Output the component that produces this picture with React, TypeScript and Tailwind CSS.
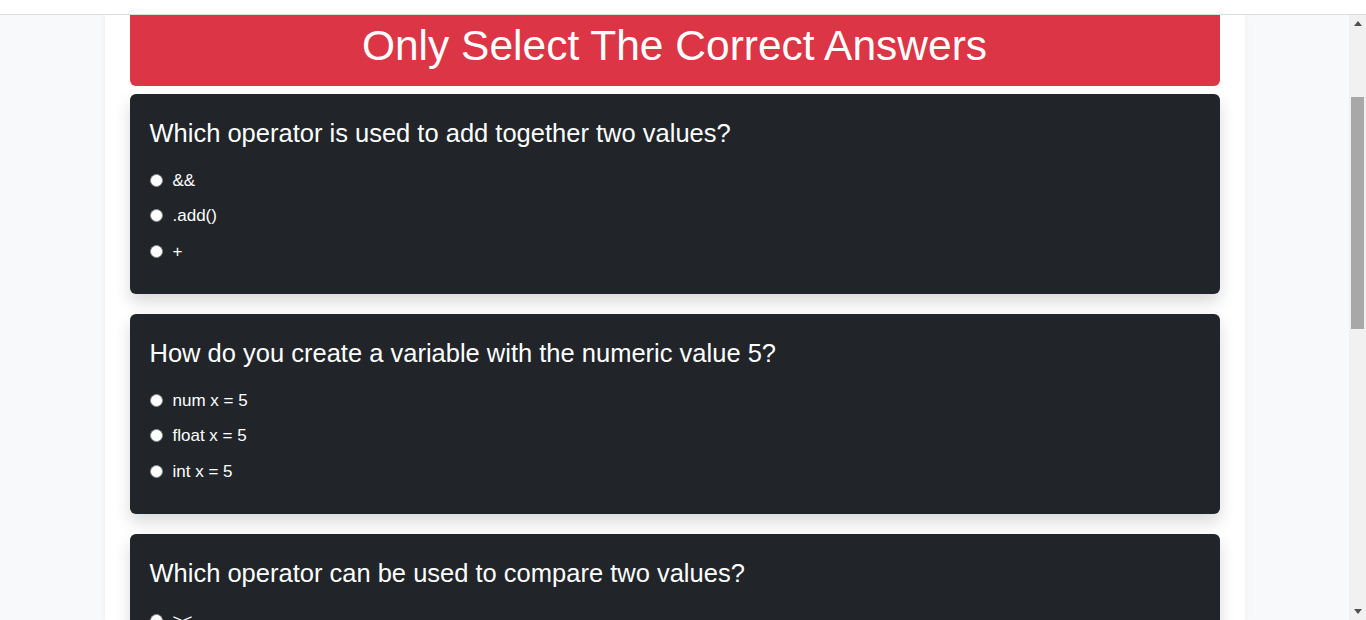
const questions = [
  {
    q: "Which operator is used to add together two values?",
    options: ["&&", ".add()", "+"],
  },
  {
    q: "How do you create a variable with the numeric value 5?",
    options: ["num x = 5", "float x = 5", "int x = 5"],
  },
  {
    q: "Which operator can be used to compare two values?",
    options: ["><", "<>", "==", "="],
  },
]

function QuestionCard({ index, q, options }: { index: number; q: string; options: string[] }) {
  return (
    <div className="h-[200px] shrink-0 overflow-hidden rounded-md bg-[#212529] px-5 pt-6 shadow-[0_0.5rem_1rem_rgba(0,0,0,0.15)]">
      <h3 className="text-[25.5px] leading-[30px] font-normal text-white">{q}</h3>
      <div className="mt-[19.5px] flex flex-col gap-[10px]">
        {options.map((opt) => (
          <label key={opt} className="flex items-center gap-[10px] text-[17px] leading-[25.5px] text-white">
            <input
              type="radio"
              name={`q${index}`}
              className="m-0 h-[13px] w-[13px] appearance-none rounded-full border border-[#8a8a8a] bg-white"
            />
            <span>{opt}</span>
          </label>
        ))}
      </div>
    </div>
  )
}

export default function App() {
  return (
    <div className="flex h-[620px] flex-col overflow-hidden bg-[#f8f9fa] font-['Liberation_Sans',Arial,sans-serif]">
      {/* cut-off navbar */}
      <div className="h-[15px] shrink-0 border-b border-[#dcdcdc] bg-white" />

      <div className="flex min-h-0 flex-1">
        <main className="min-w-0 flex-1 overflow-hidden">
          <div className="mx-auto flex h-full w-[1140px] flex-col bg-white px-[25px] shadow-[0_0_6px_rgba(0,0,0,0.06)]">
            <div className="h-[71px] shrink-0 rounded-b-md bg-[#dc3545] pt-[6px] text-center">
              <h1 className="text-[42.5px] leading-[50px] font-normal text-white">Only Select The Correct Answers</h1>
            </div>
            <div className="mt-2 flex flex-col gap-5">
              {questions.map((item, i) => (
                <QuestionCard key={i} index={i} q={item.q} options={item.options} />
              ))}
            </div>
          </div>
        </main>

        {/* scrollbar */}
        <div className="flex w-[17px] shrink-0 flex-col items-center bg-[#f1f1f1]">
          <div className="flex h-[17px] items-center justify-center">
            <svg width="8" height="5" viewBox="0 0 8 5">
              <path d="M4 0 L8 5 L0 5 Z" fill="#505050" />
            </svg>
          </div>
          <div className="mt-[65px] h-[232px] w-[13px] bg-[#a8a8a8]" />
          <div className="flex-1" />
          <div className="flex h-[17px] items-center justify-center">
            <svg width="8" height="5" viewBox="0 0 8 5">
              <path d="M0 0 L8 0 L4 5 Z" fill="#505050" />
            </svg>
          </div>
        </div>
      </div>
    </div>
  )
}
